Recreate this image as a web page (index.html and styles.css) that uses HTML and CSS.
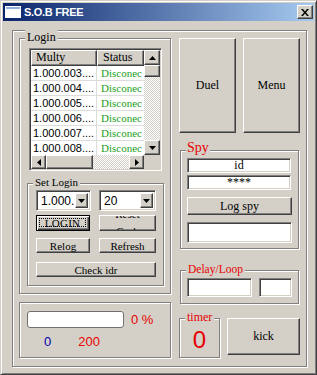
FILE: index.html
```html
<!DOCTYPE html>
<html lang="en">
<head>
  <meta charset="UTF-8" />
  <title>S.O.B FREE</title>
  <link rel="stylesheet" href="styles.css">
</head>
<body>
  <div class="window">
    <div class="titlebar">
      <svg class="app-icon" width="16" height="12" viewBox="0 0 16 12">
        <rect x="0" y="0" width="16" height="12" fill="#fff"/>
        <rect x="1" y="1" width="14" height="2" fill="#8fb0e0"/>
      </svg>
      <span class="title">S.O.B FREE</span>
      <div class="close-btn raised">
        <svg width="8" height="7" viewBox="0 0 8 7">
          <path d="M0 0h2l2 2.4L6 0h2L5 3.5 8 7H6L4 4.6 2 7H0l3-3.5z" fill="#000"/>
        </svg>
      </div>
    </div>

    <div class="frame">
      <div class="col-left">
        <div class="group login">
          <span class="legend">Login</span>

          <div class="listview">
            <div class="lv-body">
              <div class="lv-table">
                <div class="lv-head">
                  <div class="raised c1">Multy</div>
                  <div class="raised c2">Status</div>
                </div>
                <div class="lv-row"><div class="c1">1.000.003....</div><div class="c2">Disconec</div></div>
                <div class="lv-row"><div class="c1">1.000.004....</div><div class="c2">Disconec</div></div>
                <div class="lv-row"><div class="c1">1.000.005....</div><div class="c2">Disconec</div></div>
                <div class="lv-row"><div class="c1">1.000.006....</div><div class="c2">Disconec</div></div>
                <div class="lv-row"><div class="c1">1.000.007....</div><div class="c2">Disconec</div></div>
                <div class="lv-row"><div class="c1">1.000.008....</div><div class="c2">Disconec</div></div>
              </div>
              <div class="vscroll">
                <div class="sb-btn raised"><svg width="7" height="4"><polygon points="0,4 7,4 3.5,0"/></svg></div>
                <div class="thumb raised"></div>
                <div class="track"></div>
                <div class="sb-btn raised"><svg width="7" height="4"><polygon points="0,0 7,0 3.5,4"/></svg></div>
              </div>
            </div>
            <div class="lv-foot">
              <div class="hscroll">
                <div class="sb-btn raised"><svg width="4" height="7"><polygon points="4,0 4,7 0,3.5"/></svg></div>
                <div class="thumb raised"></div>
                <div class="track"></div>
                <div class="sb-btn raised"><svg width="4" height="7"><polygon points="0,0 0,7 4,3.5"/></svg></div>
              </div>
              <div class="corner"></div>
            </div>
          </div>

          <div class="group set-login">
            <span class="legend">Set Login</span>
            <div class="sl-row combos">
              <div class="combo c-multy"><span>1.000.</span><div class="drop raised"><svg width="7" height="4"><polygon points="0,0 7,0 3.5,4"/></svg></div></div>
              <div class="combo c-num"><span>20</span><div class="drop raised"><svg width="7" height="4"><polygon points="0,0 7,0 3.5,4"/></svg></div></div>
            </div>
            <div class="sl-row btns row-login">
              <button class="btn default"><span class="focus">LOGIN</span></button>
              <button class="btn wide clip"><span>Reset<br>Cach</span></button>
            </div>
            <div class="sl-row btns row-relog">
              <button class="btn raised">Relog</button>
              <button class="btn raised wide">Refresh</button>
            </div>
            <div class="sl-row btns row-check">
              <button class="btn raised full">Check idr</button>
            </div>
          </div>
        </div>

        <div class="group progress">
          <div class="prog-row">
            <div class="prog-bar"></div>
            <span class="pct">0 %</span>
          </div>
          <div class="count-row">
            <span class="count-blue">0</span>
            <span class="count-red">200</span>
          </div>
        </div>
      </div>

      <div class="col-right">
        <div class="big-row">
          <button class="btn raised big">Duel</button>
          <button class="btn raised big">Menu</button>
        </div>

        <div class="group spy">
          <span class="legend red spy-label">Spy</span>
          <input class="tb" type="text" value="id">
          <input class="tb pass" type="text" value="****">
          <button class="btn raised logspy">Log spy</button>
          <input class="tb spy-out" type="text" value="">
        </div>

        <div class="group delay">
          <span class="legend red">Delay/Loop</span>
          <input class="tb delay-a" type="text" value="">
          <input class="tb delay-b" type="text" value="">
        </div>

        <div class="bottom-row">
          <div class="group timer">
            <span class="legend red">timer</span>
            <span class="timer-val">0</span>
          </div>
          <button class="btn raised kick">kick</button>
        </div>
      </div>
    </div>
  </div>
</body>
</html>
```

FILE: styles.css
```css
* {
  box-sizing: border-box;
}

body {
  margin: 0;
  background: #d4d0c8;
  font-family: "Liberation Serif", serif;
  font-size: 11px;
  color: #000;
}

.window {
  width: 317px;
  height: 375px;
  border: 1px solid;
  border-color: #d4d0c8 #404040 #404040 #d4d0c8;
  box-shadow: inset 1px 1px #fff, inset -1px -1px #808080;
  padding: 2px;
  background: #d4d0c8;
}

/* title bar */
.titlebar {
  height: 18px;
  background: linear-gradient(to right, #0a246a, #a6caf0);
  display: flex;
  align-items: center;
  padding: 0 1px;
}

.app-icon {
  margin-left: 1px;
}

.title {
  margin-left: 3px;
  color: #fff;
  font-family: "Liberation Sans", sans-serif;
  font-weight: bold;
  font-size: 11px;
  letter-spacing: -0.3px;
}

.close-btn {
  margin-left: auto;
  width: 16px;
  height: 14px;
  display: flex;
  align-items: center;
  justify-content: center;
}

/* 3d helpers */
.raised {
  border: 1px solid;
  border-color: #fff #404040 #404040 #fff;
  box-shadow: inset -1px -1px #808080;
  background: #d4d0c8;
}

.tb, .combo {
  border: 1px solid;
  border-color: #808080 #fff #fff #808080;
  box-shadow: inset 1px 1px #404040, inset -1px -1px #d4d0c8;
  background: #fff;
}

.group {
  position: relative;
  border: 1px solid #808080;
  box-shadow: inset 1px 1px #fff, 1px 1px #fff;
}

.legend {
  position: absolute;
  top: -9px;
  left: 5px;
  padding: 0 2px;
  background: #d4d0c8;
  font-size: 12px;
  line-height: 14px;
  white-space: nowrap;
}

.red {
  color: #e60000;
}

/* main frame */
.frame {
  margin: 9px 0 0 9px;
  width: 295px;
  height: 337px;
  border: 1px solid #808080;
  box-shadow: inset 1px 1px #fff, 1px 1px #fff;
  display: flex;
  gap: 8px;
  padding: 7px 0 0 6px;
}

.col-left {
  width: 152px;
  display: flex;
  flex-direction: column;
  gap: 8px;
}

.col-right {
  width: 121px;
  display: flex;
  flex-direction: column;
}

/* login group */
.login {
  height: 256px;
  padding: 9px 0 0 9px;
}

.listview {
  width: 133px;
  height: 123px;
  border: 1px solid;
  border-color: #808080 #fff #fff #808080;
  box-shadow: inset 1px 1px #404040, inset -1px -1px #d4d0c8;
  padding: 1px;
  background: #fff;
  display: flex;
  flex-direction: column;
  overflow: hidden;
}

.lv-body {
  display: flex;
  height: 105px;
}

.lv-table {
  width: 113px;
  overflow: hidden;
}

.lv-head {
  display: flex;
  height: 16px;
}

.lv-head div {
  font-size: 12px;
  line-height: 13px;
  padding-left: 4px;
}

.lv-head .c1 { width: 66px; }
.lv-head .c2 { width: 47px; padding-left: 5px; }

.lv-row {
  display: flex;
  height: 15px;
  line-height: 14px;
  border-bottom: 1px solid #dcdcdc;
}

.lv-row .c1 {
  width: 66px;
  padding-left: 2px;
  border-right: 1px solid #dcdcdc;
  font-family: "Liberation Sans", sans-serif;
  font-size: 11px;
}

.lv-row .c2 {
  width: 47px;
  padding-left: 4px;
  color: #1a9f1a;
  white-space: nowrap;
  overflow: hidden;
}

.vscroll {
  width: 16px;
  display: flex;
  flex-direction: column;
}

.sb-btn {
  display: flex;
  align-items: center;
  justify-content: center;
}

.vscroll .sb-btn { height: 15px; }
.vscroll .thumb { height: 12px; }

.track {
  flex: 1;
  background: repeating-conic-gradient(#d4d0c8 0 25%, #fff 0 50%) 0 0 / 2px 2px;
}

.lv-foot {
  display: flex;
  height: 14px;
}

.hscroll {
  width: 113px;
  display: flex;
}

.hscroll .sb-btn { width: 15px; }
.hscroll .thumb { width: 47px; }

.corner {
  flex: 1;
  background: #d4d0c8;
}

/* set login */
.set-login {
  width: 137px;
  height: 103px;
  margin: 12px 0 0 -2px;
  padding: 6px 0 0 8px;
}

.set-login .legend {
  font-size: 11px;
  line-height: 13px;
  top: -8px;
}

.sl-row {
  display: flex;
  gap: 9px;
}

.combos {
  height: 21px;
  gap: 8px;
}

.combo {
  display: flex;
  align-items: stretch;
  padding: 2px;
  font-family: "Liberation Sans", sans-serif;
  font-size: 12px;
}

.combo span {
  flex: 1;
  padding-left: 2px;
  line-height: 17px;
}

.c-multy { width: 55px; }
.c-num { width: 57px; }

.drop {
  width: 13px;
  display: flex;
  align-items: center;
  justify-content: center;
}

.btn {
  font: inherit;
  font-size: 11px;
  color: #000;
  padding: 0;
  margin: 0;
  display: flex;
  align-items: center;
  justify-content: center;
  width: 54px;
  height: 100%;
}

.btn.wide { width: 57px; }
.btn.full { width: 120px; }

.btns { height: 15px; }
.row-login { height: 16px; margin-top: 4px; }
.row-relog { margin-top: 7px; }
.row-check { margin-top: 9px; }

.btn.default {
  border: 1px solid #000;
  background: #d4d0c8;
  box-shadow: inset 1px 1px #fff, inset -1px -1px #404040, inset -2px -2px #808080;
  padding: 2px 3px 3px 2px;
}

.focus {
  flex: 1;
  align-self: stretch;
  border: 1px dotted #000;
  line-height: 8px;
  letter-spacing: 0.3px;
  display: flex;
  align-items: center;
  justify-content: center;
}

.btn.clip {
  border: 1px solid;
  border-color: #fff #404040 #404040 #fff;
  box-shadow: inset -1px -1px #808080;
  background: #d4d0c8;
  overflow: hidden;
  line-height: 17px;
}

/* progress */
.progress {
  height: 56px;
  padding: 8px 0 0 7px;
}

.prog-row {
  display: flex;
  align-items: center;
  gap: 7px;
}

.prog-bar {
  width: 97px;
  height: 17px;
  background: #fff;
  border: 1px solid #707070;
  border-radius: 3px;
}

.pct, .count-row {
  font-family: "Liberation Sans", sans-serif;
  font-size: 13px;
  color: #e60000;
}

.count-row {
  display: flex;
  gap: 27px;
  margin-top: 6px;
  padding-left: 17px;
  line-height: 15px;
}

.count-blue {
  color: #0000b0;
}

/* right column */
.big-row {
  display: flex;
  gap: 7px;
  height: 95px;
}

.btn.big {
  width: 57px;
  font-size: 12px;
}

.spy {
  width: 119px;
  height: 99px;
  margin: 17px 0 0 1px;
  padding: 7px 0 0 6px;
  display: flex;
  flex-direction: column;
  align-items: flex-start;
}

.spy-label {
  font-size: 14px;
  line-height: 16px;
  top: -11px;
  padding: 0 1px;
}

.tb {
  font: inherit;
  font-size: 12px;
  text-align: center;
  padding: 0;
  margin: 0;
  outline: none;
  color: #000;
}

.spy .tb {
  width: 104px;
  height: 15px;
}

.spy .pass {
  margin-top: 2px;
}

.btn.logspy {
  width: 105px;
  height: 18px;
  margin-top: 7px;
  font-size: 12px;
}

.spy .spy-out {
  width: 105px;
  height: 21px;
  margin-top: 7px;
}

.delay {
  width: 119px;
  height: 34px;
  margin: 21px 0 0 1px;
  padding: 7px 0 0 6px;
  display: flex;
  gap: 7px;
}

.delay .legend {
  font-size: 11.5px;
}

.delay-a { width: 65px; height: 19px; }
.delay-b { width: 33px; height: 19px; }

.bottom-row {
  display: flex;
  gap: 7px;
  margin-top: 14px;
}

.timer {
  width: 41px;
  height: 40px;
  display: flex;
  justify-content: center;
  padding-top: 8px;
}

.timer-val {
  font-family: "Liberation Sans", sans-serif;
  font-size: 24px;
  line-height: 26px;
  color: #e60000;
}

.btn.kick {
  width: 73px;
  height: 37px;
  font-size: 12px;
}
```
